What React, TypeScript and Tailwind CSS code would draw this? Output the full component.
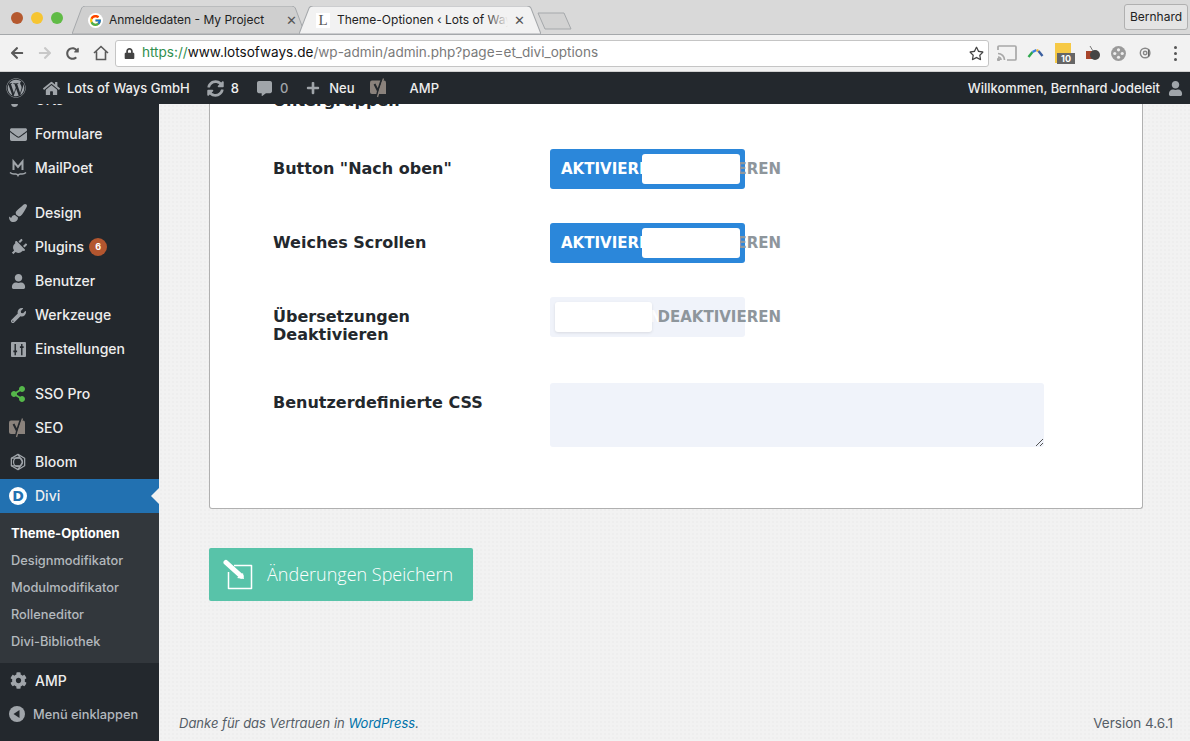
import React from "react";
import { FaWordpress, FaHome, FaSyncAlt, FaCommentAlt, FaPlus, FaEnvelope, FaPaintBrush, FaPlug, FaUser, FaWrench, FaShareAlt, FaCog, FaRegStar, FaLock, FaArrowLeft, FaArrowRight, FaRedoAlt } from "react-icons/fa";
import { FcGoogle } from "react-icons/fc";

const sans = "font-['Inter','Liberation_Sans',sans-serif]";
const grayIcon = "text-[#a0a5aa]";
const label = "font-['DejaVu_Sans',sans-serif] font-bold text-[16px] leading-[18px] text-[#23282d]";

function Tab({ active, width, pad, children }: { active?: boolean; width: string; pad: string; children: React.ReactNode }) {
  return (
    <div className={`relative h-[28px] ${width} flex items-center`}>
      <svg className="absolute inset-0 w-full h-full" viewBox="0 0 240 28" preserveAspectRatio="none">
        <path d="M0 28 L10 2 Q11 0 14 0 L226 0 Q229 0 230 2 L240 28 Z" fill={active ? "#f2f2f2" : "#cfcfcf"} stroke="#a5a8ab" strokeWidth="1" />
      </svg>
      <div className={`relative flex items-center w-full ${pad}`}>{children}</div>
    </div>
  );
}

function Switch({ on }: { on?: boolean }) {
  return (
    <div className={`relative w-[195px] h-[40px] rounded-[3px] font-['DejaVu_Sans',sans-serif] font-bold text-[15px] ${on ? "bg-[#2b87da]" : "bg-[#f0f3fa]"}`}>
      <span className="absolute left-[11px] top-[10px] leading-[20px] text-white whitespace-nowrap">AKTIVIEREN</span>
      <span className="absolute right-[-36px] top-[10px] leading-[20px] text-[#8e969c] whitespace-nowrap">DEAKTIVIEREN</span>
      {on ? (
        <div className="absolute left-[92px] top-[5px] w-[98px] h-[30px] bg-white rounded-[3px]" />
      ) : (
        <div className="absolute left-[5px] top-[5px] w-[97px] h-[30px] bg-white rounded-[3px] shadow-[0_1px_3px_rgba(0,0,0,0.1)]" />
      )}
    </div>
  );
}

function Row({ text, children, className, labelClass = "" }: { text: React.ReactNode; children: React.ReactNode; className: string; labelClass?: string }) {
  return (
    <div className={`flex ${className}`}>
      <div className={`w-[277px] shrink-0 ${label} ${labelClass}`}>{text}</div>
      {children}
    </div>
  );
}

function Sliders() {
  return (
    <svg viewBox="0 0 16 16" className="w-[15px] h-[15px]">
      <rect width="16" height="16" rx="1" fill="#a0a5aa" />
      <path d="M4.5 2v12M11.5 2v12" stroke="#23282d" strokeWidth="1.5" />
      <path d="M2.5 10h4M9.5 5.5h4" stroke="#23282d" strokeWidth="2" />
    </svg>
  );
}

function MailPoetIcon() {
  return (
    <svg viewBox="0 0 18 20" className="w-[18px] h-[20px]">
      <path d="M4.5 12V3.5L9 9l4.500-5.500V12" fill="none" stroke="#a0a5aa" strokeWidth="2" />
      <path d="M1 14.500 Q3 16.500 6 16 Q8 15.500 9 17.500 Q10 15.500 12 16 Q15 16.500 17 14.500" fill="none" stroke="#a0a5aa" strokeWidth="1.500" />
    </svg>
  );
}

function BloomIcon() {
  return (
    <svg viewBox="0 0 20 20" className="w-[18px] h-[18px]" fill="none" stroke="#a0a5aa" strokeWidth="1.400">
      <path d="M10 1.500 L17.400 5.800 V14.200 L10 18.500 L2.600 14.200 V5.800 Z" strokeLinejoin="round" />
      <circle cx="10" cy="10" r="5" />
      <path d="M10 1.500 L15 10 L10 18.500 M2.600 5.800 L12.500 5.800 M2.600 14.200 L12.500 14.200" />
    </svg>
  );
}

function YoastIcon({ size }: { size: number }) {
  return (
    <svg viewBox="0 0 20 20" style={{ width: size, height: size }}>
      <path d="M3 2.500 H15 Q17 2.500 17 4.500 V16 H3 Q1 16 1 14 V4.500 Q1 2.500 3 2.500 Z" fill="#8a827c" />
      <path d="M5.500 6 L9 13 L8 17.500 M13 0.500 L8.800 13" fill="none" stroke="#23282d" strokeWidth="2" />
      <path d="M14.500 0.500 L10 14 L8.500 19" fill="none" stroke="#8a827c" strokeWidth="1.300" />
    </svg>
  );
}

function DiviIcon() {
  return (
    <div className="w-[18px] h-[18px] rounded-full bg-white flex items-center justify-center">
      <span className="font-['DejaVu_Sans',sans-serif] font-bold text-[14px] leading-none text-[#2271b1]">D</span>
    </div>
  );
}

function CollapseIcon() {
  return (
    <svg viewBox="0 0 16 16" className="w-[16px] h-[16px]">
      <circle cx="8" cy="8" r="8" fill="#a0a5aa" />
      <path d="M10.500 4v8L4.500 8z" fill="#23282d" />
    </svg>
  );
}

function MenuItem({ icon, children, active, badge, textClass = "mb-[2px]" }: { icon: React.ReactNode; children: React.ReactNode; active?: boolean; badge?: string; textClass?: string }) {
  return (
    <div className={`relative h-[34px] flex items-center shrink-0 ${active ? "bg-[#2271b1]" : ""}`}>
      <div className="w-[35px] flex justify-center pl-[1px] shrink-0">{icon}</div>
      <span className={`text-[14px] font-medium text-[#eeeeee] whitespace-nowrap ${textClass}`}>{children}</span>
      {badge && (
        <span className="ml-[5px] mb-[1px] w-[18px] h-[18px] rounded-full bg-[#b3562f] text-white text-[9px] font-bold flex items-center justify-center">{badge}</span>
      )}
      {active && (
        <div className="absolute right-0 top-[9px] w-0 h-0 border-y-[8px] border-y-transparent border-r-[8px] border-r-[#f1f1f1]" />
      )}
    </div>
  );
}

function SubItem({ children, current }: { children: React.ReactNode; current?: boolean }) {
  return (
    <div className={`h-[27px] pl-[11px] flex items-center whitespace-nowrap ${current ? "text-[13px] font-bold text-white" : "text-[12.800px] font-medium text-[#b4b9be]"}`}>{children}</div>
  );
}

export default function App() {
  return (
    <div className={`w-[1190px] h-[741px] overflow-hidden flex flex-col bg-[#f1f1f1] ${sans}`}>
      {/* Tab strip */}
      <div className="h-[35px] shrink-0 bg-[#d9d9d9] border-b border-[#a5a8ab] flex items-end">
        <div className="flex items-center gap-[8px] pl-[11px] w-[72px] shrink-0 h-full self-start pt-[2px]">
          <span className="w-[12px] h-[12px] rounded-full bg-[#b5592f]" />
          <span className="w-[12px] h-[12px] rounded-full bg-[#f6c532]" />
          <span className="w-[12px] h-[12px] rounded-full bg-[#60bb46]" />
        </div>
        <Tab width="w-[233px]" pad="pl-[16px] pr-[8px]">
          <span className="w-[15px] h-[15px] mr-[6px] rounded-full bg-white flex items-center justify-center shrink-0"><FcGoogle size={13} /></span>
          <span className="text-[12px] text-[#222] whitespace-nowrap flex-1">Anmeldedaten - My Project</span>
          <span className="text-[13px] text-[#555] leading-none">✕</span>
        </Tab>
        <div className="-ml-[6px]">
          <Tab active width="w-[242px]" pad="pl-[17px] pr-[16px]">
            <span className="w-[14px] h-[15px] mr-[7px] bg-white flex items-center justify-center shrink-0 font-['Liberation_Serif',serif] text-[15px] leading-none text-[#555]">L</span>
            <span className="relative flex-1 overflow-hidden mr-[6px]">
              <span className="block text-[12px] text-[#222] whitespace-nowrap">Theme-Optionen ‹ Lots of Way</span>
              <span className="absolute right-0 top-0 bottom-0 w-[22px] bg-gradient-to-r from-transparent to-[#f2f2f2]" />
            </span>
            <span className="text-[13px] text-[#555] leading-none">✕</span>
          </Tab>
        </div>
        <svg viewBox="0 0 35 18" className="w-[35px] h-[18px] -ml-[4px] mb-[4px] shrink-0">
          <path d="M1 1 H27 L34 17 H8 Z" fill="#d2d2d2" stroke="#a5a8ab" />
        </svg>
        <div className="flex-1" />
        <div className="self-start mt-[4px] mr-[2px] w-[64px] h-[26px] border border-[#b0b0b0] rounded-[3px] bg-[#e4e4e4] flex items-center justify-center text-[12px] text-[#222]">Bernhard</div>
      </div>

      {/* Toolbar */}
      <div className="h-[37px] shrink-0 bg-[#f2f2f2] border-b border-[#d0d0d0] flex items-center">
        <div className="flex items-center w-[115px] shrink-0 pl-[10px] gap-[14px] text-[#5a5a5a]">
          <FaArrowLeft size={14} />
          <FaArrowRight size={14} className="text-[#c8c8c8]" />
          <FaRedoAlt size={13} />
          <svg viewBox="0 0 16 16" className="w-[16px] h-[16px]" fill="none" stroke="#5a5a5a" strokeWidth="1.600"><path d="M1 8 8 1.500 15 8M3.500 6.500V14.500H12.500V6.500" /></svg>
        </div>
        <div className="w-[874px] h-[27px] shrink-0 bg-white border border-[#c5c5c5] rounded-[3px] flex items-center pl-[8px] pr-[4px] text-[13.560px] leading-none">
          <FaLock size={11} className="text-[#444] mr-[7px] shrink-0" />
          <span className="text-[#2f8f4e]">https://</span>
          <span className="text-[#111]">www.lotsofways.de</span>
          <span className="text-[#7a7a7a]">/wp-admin/admin.php?page=et_divi_options</span>
          <div className="flex-1" />
          <FaRegStar size={15} className="text-[#444]" />
        </div>
        <div className="flex items-center flex-1 pl-[8px]">
          <svg viewBox="0 0 20 16" className="w-[20px] h-[16px] shrink-0" fill="none" stroke="#a8a8a8" strokeWidth="1.700">
            <path d="M1 5 V2 Q1 1 2 1 H18 Q19 1 19 2 V14 Q19 15 18 15 H10" />
            <path d="M1 8.500 A6.500 6.500 0 0 1 7.500 15 M1 12 A3 3 0 0 1 4 15" />
            <circle cx="1.500" cy="14.500" r="0.800" fill="#a8a8a8" />
          </svg>
          <svg viewBox="0 0 16 10" className="w-[17px] h-[10px] ml-[10px] shrink-0" fill="none" strokeWidth="2.400"><path d="M1 9 L5 4" stroke="#2fa84f" /><path d="M5 4 L9 2" stroke="#3b7fe0" /><path d="M9 2 L11 3" stroke="#f2b632" /><path d="M11 3 L15 8" stroke="#3b5fa0" /></svg>
          <div className="relative w-[16px] h-[20px] ml-[11px] bg-[#f6c945] shrink-0">
            <span className="absolute left-[2px] bottom-[-1px] w-[18px] h-[11px] bg-[#666] text-white text-[9px] font-bold leading-[11px] text-center">10</span>
          </div>
          <svg viewBox="0 0 16 16" className="w-[16px] h-[16px] ml-[14px] shrink-0"><rect x="1" y="6" width="6" height="8" fill="#a8452c" /><circle cx="10" cy="10" r="5" fill="#444" /><path d="M5 1l3 5" stroke="#777" /></svg>
          <svg viewBox="0 0 16 16" className="w-[17px] h-[17px] ml-[9px] shrink-0"><circle cx="8" cy="8" r="7" fill="#9a9a9a" /><circle cx="8" cy="4.500" r="1.500" fill="#eee" /><circle cx="8" cy="11.500" r="1.500" fill="#eee" /><circle cx="4.500" cy="8" r="1.500" fill="#eee" /><circle cx="11.500" cy="8" r="1.500" fill="#eee" /></svg>
          <svg viewBox="0 0 16 16" className="w-[14px] h-[14px] ml-[12px] shrink-0" fill="none" stroke="#888" strokeWidth="1.600"><circle cx="7" cy="8" r="5.500" /><circle cx="7" cy="8" r="2" /><path d="M11 4v8" stroke="#666" /></svg>
          <div className="flex flex-col gap-[3px] ml-[21px]">
            <span className="w-[3px] h-[3px] rounded-full bg-[#555]" />
            <span className="w-[3px] h-[3px] rounded-full bg-[#555]" />
            <span className="w-[3px] h-[3px] rounded-full bg-[#555]" />
          </div>
        </div>
      </div>

      {/* Admin bar */}
      <div className="h-[32px] shrink-0 bg-[#23282d] flex items-center text-[13px] font-medium text-[#eeeeee] whitespace-nowrap">
        <FaWordpress size={20} className={`${grayIcon} ml-[6px]`} />
        <FaHome size={17} className={`${grayIcon} ml-[17px]`} />
        <span className="ml-[7px] mt-[1px]">Lots of Ways GmbH</span>
        <FaSyncAlt size={17} className={`${grayIcon} ml-[17px]`} />
        <span className="ml-[7px] mt-[1px]">8</span>
        <FaCommentAlt size={15} className={`${grayIcon} ml-[18px]`} />
        <span className="ml-[8px] mt-[1px] text-[#a0a5aa]">0</span>
        <FaPlus size={14} className={`${grayIcon} ml-[18px]`} />
        <span className="ml-[9px] mt-[1px]">Neu</span>
        <div className="ml-[14px]"><YoastIcon size={20} /></div>
        <span className="ml-[21px] mt-[1px]">AMP</span>
        <div className="flex-1" />
        <span className="mt-[1px] text-[12.900px]">Willkommen, Bernhard Jodeleit</span>
        <FaUser size={15} className={`${grayIcon} ml-[8px] mr-[7px]`} />
      </div>

      {/* Body */}
      <div className="flex-1 min-h-0 flex">
        {/* Sidebar */}
        <aside className="w-[159px] shrink-0 bg-[#23282d] flex flex-col overflow-hidden">
          <div className="shrink-0 -mt-[21px]">
            <MenuItem icon={<FaPaintBrush size={14} className={grayIcon} />}>Orts</MenuItem>
          </div>
          <MenuItem icon={<FaEnvelope size={17} className={grayIcon} />}>Formulare</MenuItem>
          <MenuItem icon={<MailPoetIcon />}>MailPoet</MenuItem>
          <div className="h-[11px] shrink-0" />
          <MenuItem icon={<FaPaintBrush size={18} className={grayIcon} />}>Design</MenuItem>
          <MenuItem icon={<FaPlug size={17} className={`${grayIcon} rotate-45`} />} badge="6">Plugins</MenuItem>
          <MenuItem icon={<FaUser size={15} className={grayIcon} />}>Benutzer</MenuItem>
          <MenuItem icon={<FaWrench size={15} className={grayIcon} />}>Werkzeuge</MenuItem>
          <MenuItem icon={<Sliders />}>Einstellungen</MenuItem>
          <div className="h-[11px] shrink-0" />
          <MenuItem icon={<FaShareAlt size={16} className="text-[#55b84a]" />}>SSO Pro</MenuItem>
          <MenuItem icon={<YoastIcon size={20} />}>SEO</MenuItem>
          <MenuItem icon={<BloomIcon />}>Bloom</MenuItem>
          <MenuItem active icon={<DiviIcon />}>Divi</MenuItem>
          <div className="h-[150px] shrink-0 bg-[#32373c] pt-[7px]">
            <SubItem current>Theme-Optionen</SubItem>
            <SubItem>Designmodifikator</SubItem>
            <SubItem>Modulmodifikator</SubItem>
            <SubItem>Rolleneditor</SubItem>
            <SubItem>Divi-Bibliothek</SubItem>
          </div>
          <MenuItem textClass="" icon={<FaCog size={17} className={grayIcon} />}>AMP</MenuItem>
          <div className="h-[34px] flex items-center shrink-0 text-[12.800px] font-medium text-[#b4b9be] whitespace-nowrap">
            <div className="w-[33px] flex justify-center pl-[1px]"><CollapseIcon /></div>
            <span className="mt-[2px]">Menü einklappen</span>
          </div>
        </aside>

        {/* Content */}
        <main className="flex-1 min-w-0 flex flex-col pl-[50px] pr-[47px] overflow-hidden bg-[#f2f2f2] bg-[radial-gradient(#eeeeee_1px,transparent_1px)] bg-[length:4px_4px]">
          <div className="h-[405px] shrink-0 bg-white border border-[#b0b0b0] border-t-0 rounded-b-[3px] pl-[63px] overflow-hidden">
            <div className={`-mt-[12px] h-[18px] ${label}`}>Untergruppen</div>
            <Row text={'Button "Nach oben"'} className="mt-[39px] h-[40px] items-center"><Switch on /></Row>
            <Row text="Weiches Scrollen" className="mt-[34px] h-[40px] items-center"><Switch on /></Row>
            <Row text={<>Übersetzungen<br />Deaktivieren</>} labelClass="pt-[11px]" className="mt-[34px] h-[40px] items-start">
              <Switch />
            </Row>
            <div className="mt-[46px] flex">
              <div className={`w-[277px] shrink-0 pt-[11px] ${label}`}>Benutzerdefinierte CSS</div>
              <div className="relative w-[494px] h-[64px] bg-[#f0f3fa] rounded-[3px]">
                <svg viewBox="0 0 10 10" className="absolute right-0 bottom-0 w-[10px] h-[10px]"><path d="M2 9 9 2M6 9 9 6" stroke="#555" strokeWidth="1" /></svg>
              </div>
            </div>
          </div>
          <div className="mt-[39px] w-[264px] h-[53px] shrink-0 bg-[#58c3a9] rounded-[2px] flex items-center text-white">
            <svg viewBox="0 0 32 32" className="w-[32px] h-[32px] ml-[13px] shrink-0" fill="none">
              <path d="M12 6.500 H29.500 V29.500 H6.500 V13" stroke="#fff" strokeWidth="1.500" strokeLinejoin="round" />
              <path d="M4 3.500 L19 17" stroke="#fff" strokeWidth="5" strokeLinecap="round" />
              <path d="M15 19 L21 14 L22 20 Z" fill="#fff" />
            </svg>
            <span className="ml-[13px] font-['Open_Sans',sans-serif] text-[18px] font-light">Änderungen Speichern</span>
          </div>
          <div className="flex-1" />
          <div className="h-[34px] -mx-[30px] shrink-0 flex justify-between items-start pt-[6px] text-[13px] leading-[20px] text-[#555d66]">
            <span className="italic">Danke für das Vertrauen in <span className="text-[#0073aa]">WordPress</span>.</span>
            <span className="text-[13.500px]">Version 4.6.1</span>
          </div>
        </main>
      </div>
    </div>
  );
}
